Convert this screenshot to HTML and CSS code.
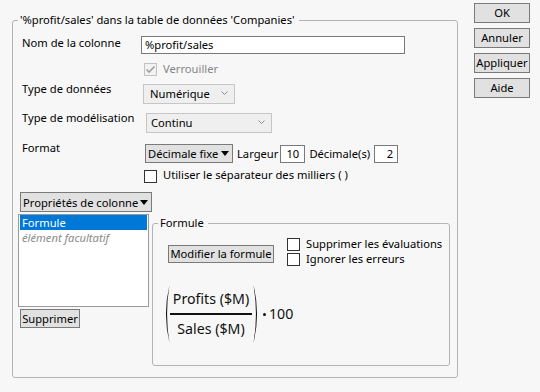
FILE: index.html
```html
<!DOCTYPE html>
<html lang="fr">
<head>
    <meta charset="UTF-8">
    <title>Informations sur la colonne</title>
    <link rel="stylesheet" href="styles.css">
</head>
<body>

    <div class="dialog">
        <fieldset class="group group-main">
            <legend>'%profit/sales' dans la table de données 'Companies'</legend>
            <div class="main-body">

                <div class="row row-name">
                    <span class="label">Nom de la colonne</span>
                    <span class="textbox name-box">%profit/sales</span>
                </div>

                <div class="row row-lock">
                    <span class="option">
                        <span class="check check-disabled">
                            <svg width="11" height="11" viewBox="0 0 11 11"><polyline points="1.5,5.5 4,8 9.5,2.5" fill="none" stroke="#a0a0a0" stroke-width="1.6"/></svg>
                        </span>
                        <span class="muted">Verrouiller</span>
                    </span>
                </div>

                <div class="row row-type">
                    <span class="label">Type de données</span>
                    <span class="combo combo-type">Numérique
                        <svg class="chevron" width="7" height="4" viewBox="0 0 7 4"><polyline points="0.5,0.5 3.5,3.5 6.5,0.5" fill="none" stroke="#8a8a8a"/></svg>
                    </span>
                </div>

                <div class="row row-model">
                    <span class="label">Type de modélisation</span>
                    <span class="combo combo-model">Continu
                        <svg class="chevron" width="7" height="4" viewBox="0 0 7 4"><polyline points="0.5,0.5 3.5,3.5 6.5,0.5" fill="none" stroke="#8a8a8a"/></svg>
                    </span>
                </div>

                <div class="row row-format">
                    <span class="label">Format</span>
                    <span class="format-controls">
                        <span class="menu-btn format-menu">Décimale fixe <span class="tri"></span></span>
                        <span class="inline-label">Largeur</span>
                        <span class="textbox num-box width-box">10</span>
                        <span class="inline-label">Décimale(s)</span>
                        <span class="textbox num-box dec-box">2</span>
                    </span>
                </div>

                <div class="row row-sep">
                    <span class="option">
                        <span class="check"></span>
                        <span>Utiliser le séparateur des milliers ( )</span>
                    </span>
                </div>

                <span class="menu-btn props-menu">Propriétés de colonne <span class="tri"></span></span>

                <div class="lower">
                    <div class="left-col">
                        <div class="listbox">
                            <div class="list-item selected">Formule</div>
                            <div class="list-item optional">élément facultatif</div>
                        </div>
                        <span class="button delete-btn">Supprimer</span>
                    </div>

                    <fieldset class="group group-formula">
                        <legend>Formule</legend>
                        <div class="formula-top">
                            <span class="button edit-btn">Modifier la formule</span>
                            <div class="formula-options">
                                <span class="option"><span class="check"></span><span>Supprimer les évaluations</span></span>
                                <span class="option"><span class="check"></span><span>Ignorer les erreurs</span></span>
                            </div>
                        </div>
                        <div class="formula">
                            <svg class="paren" width="7" height="58" viewBox="0 0 7 58"><path d="M6.5 0 Q-0.6 29 6.5 58 Q1.6 29 6.5 0 Z" fill="#111"/></svg>
                            <div class="fraction">
                                <span class="numer">Profits ($M)</span>
                                <span class="bar"></span>
                                <span class="denom">Sales ($M)</span>
                            </div>
                            <svg class="paren paren-right" width="7" height="58" viewBox="0 0 7 58"><path d="M0.5 0 Q7.6 29 0.5 58 Q5.4 29 0.5 0 Z" fill="#111"/></svg>
                            <span class="dot"></span>
                            <span class="factor">100</span>
                        </div>
                    </fieldset>
                </div>

            </div>
        </fieldset>

        <div class="side-buttons">
            <span class="button">OK</span>
            <span class="button">Annuler</span>
            <span class="button">Appliquer</span>
            <span class="button">Aide</span>
        </div>
    </div>

</body>
</html>
```

FILE: styles.css
```css
* {
    box-sizing: border-box;
}

body {
    margin: 0;
    background-color: #f7f7f7;
    color: #000;
    font-family: "Noto Sans", "DejaVu Sans", sans-serif;
    font-size: 11.2px;
    line-height: 16px;
    white-space: nowrap;
    overflow: hidden;
}

.dialog {
    display: flex;
    align-items: flex-start;
    width: 540px;
    height: 392px;
}

/* group boxes */
.group {
    margin: 0;
    padding: 0;
    min-width: 0;
    border: 1px solid #b4b4b4;
    border-radius: 3px;
}

.group legend {
    margin-left: 5px;
    padding: 0 4px 0 2px;
    line-height: 16px;
}

.group-main {
    margin: 12px 0 0 12px;
    width: 446px;
    height: 366px;
}

.main-body {
    padding-left: 9px;
}

/* label / control rows */
.row {
    display: grid;
    grid-template-columns: 122px auto;
    align-items: start;
    justify-items: start;
}

.row > .option,
.row > .format-controls {
    grid-column: 2;
}

.row-name  { margin-top: 7px; }
.row-lock  { margin-top: 7px; }
.row-type  { margin-top: 4px; }
.row-model { margin-top: 6px; }
.row-format { margin-top: 7px; }
.row-sep   { margin-top: 4px; }

.textbox {
    display: block;
    height: 18px;
    padding: 1px 3px;
    line-height: 14px;
    background-color: #fff;
    border: 1px solid #7a7a7a;
}

.name-box {
    width: 264px;
    margin: 1px 0 0 -3px;
}

/* checkboxes */
.option {
    display: flex;
    align-items: flex-start;
    gap: 6px;
}

.check {
    display: flex;
    align-items: center;
    justify-content: center;
    width: 13px;
    height: 13px;
    margin-top: 2px;
    background-color: #fff;
    border: 1px solid #333;
}

.row-sep .check {
    margin-top: 3px;
}

.check-disabled {
    background-color: #f2f2f2;
    border-color: #c2c2c2;
}

.muted {
    color: #858585;
}

/* drop-down lists */
.combo {
    display: flex;
    align-items: center;
    justify-content: space-between;
    height: 20px;
    margin-top: 3px;
    padding: 0 6px 1px 6px;
    line-height: 16px;
    background-color: #efefef;
    border: 1px solid #c6c6c6;
}

.combo-type {
    width: 92px;
    margin-left: -1px;
}

.combo-model {
    width: 126px;
    margin-left: 2px;
    padding-left: 4px;
}

.chevron {
    margin-top: -2px;
}

.menu-btn {
    display: flex;
    align-items: center;
    justify-content: space-between;
    padding: 0 3px 0 2px;
    line-height: 17px;
    background-color: #e1e1e1;
    border: 1px solid #7a7a7a;
}

.tri {
    width: 0;
    height: 0;
    border-left: 4px solid transparent;
    border-right: 4px solid transparent;
    border-top: 5px solid #000;
}

.format-controls {
    display: flex;
    align-items: center;
    margin: 4px 0 0 1px;
}

.format-menu {
    width: 88px;
    height: 19px;
}

.inline-label {
    margin-left: 4px;
}

.num-box {
    height: 18px;
    padding: 1px 4px;
}

.width-box {
    width: 25px;
    margin-left: 2px;
    text-align: center;
}

.dec-box {
    width: 24px;
    margin-left: 4px;
    text-align: right;
}

.props-menu {
    width: 132px;
    height: 20px;
    margin: 9px 0 0 -2px;
}

/* lower part: property list + formula box */
.lower {
    display: flex;
    align-items: flex-start;
    margin: 2px 0 0 -4px;
}

.left-col {
    display: flex;
    flex-direction: column;
    align-items: flex-start;
}

.listbox {
    width: 131px;
    height: 93px;
    padding: 0 1px;
    background-color: #fff;
    border: 1px solid #9a9a9a;
}

.list-item {
    height: 15px;
    padding-left: 2px;
    line-height: 15px;
}

.list-item.selected {
    background-color: #0078d7;
    color: #fff;
}

.list-item.optional {
    color: #8a8a8a;
    font-style: italic;
}

.button {
    display: block;
    height: 20px;
    line-height: 17px;
    text-align: center;
    background-color: #e1e1e1;
    border: 1px solid #7a7a7a;
}

.delete-btn {
    width: 60px;
    height: 19px;
    margin: 2px 0 0 2px;
}

.group-formula {
    width: 298px;
    height: 151px;
    margin: 1px 0 0 3px;
}

.formula-top {
    display: flex;
    align-items: flex-start;
    margin-top: 5px;
}

.edit-btn {
    width: 106px;
    height: 18px;
    margin: 9px 0 0 15px;
    line-height: 16px;
}

.formula-options {
    display: flex;
    flex-direction: column;
    margin-left: 13px;
    line-height: 15px;
}

/* rendered formula */
.formula {
    display: flex;
    align-items: center;
    margin: 19px 0 0 10px;
    font-size: 14.2px;
    line-height: 18px;
    color: #111;
}

.fraction {
    display: flex;
    flex-direction: column;
    align-items: center;
    width: 82px;
}

.bar {
    align-self: stretch;
    height: 1.5px;
    margin: 5px 0;
    background-color: #111;
}

.paren-right {
    margin-left: 1px;
}

.dot {
    width: 3px;
    height: 3px;
    margin-left: 3px;
    border-radius: 50%;
    background-color: #111;
}

.factor {
    margin-left: 3px;
}

/* OK / Annuler / ... */
.side-buttons {
    display: flex;
    flex-direction: column;
    gap: 5px;
    width: 56px;
    margin: 3px 0 0 16px;
}
```
